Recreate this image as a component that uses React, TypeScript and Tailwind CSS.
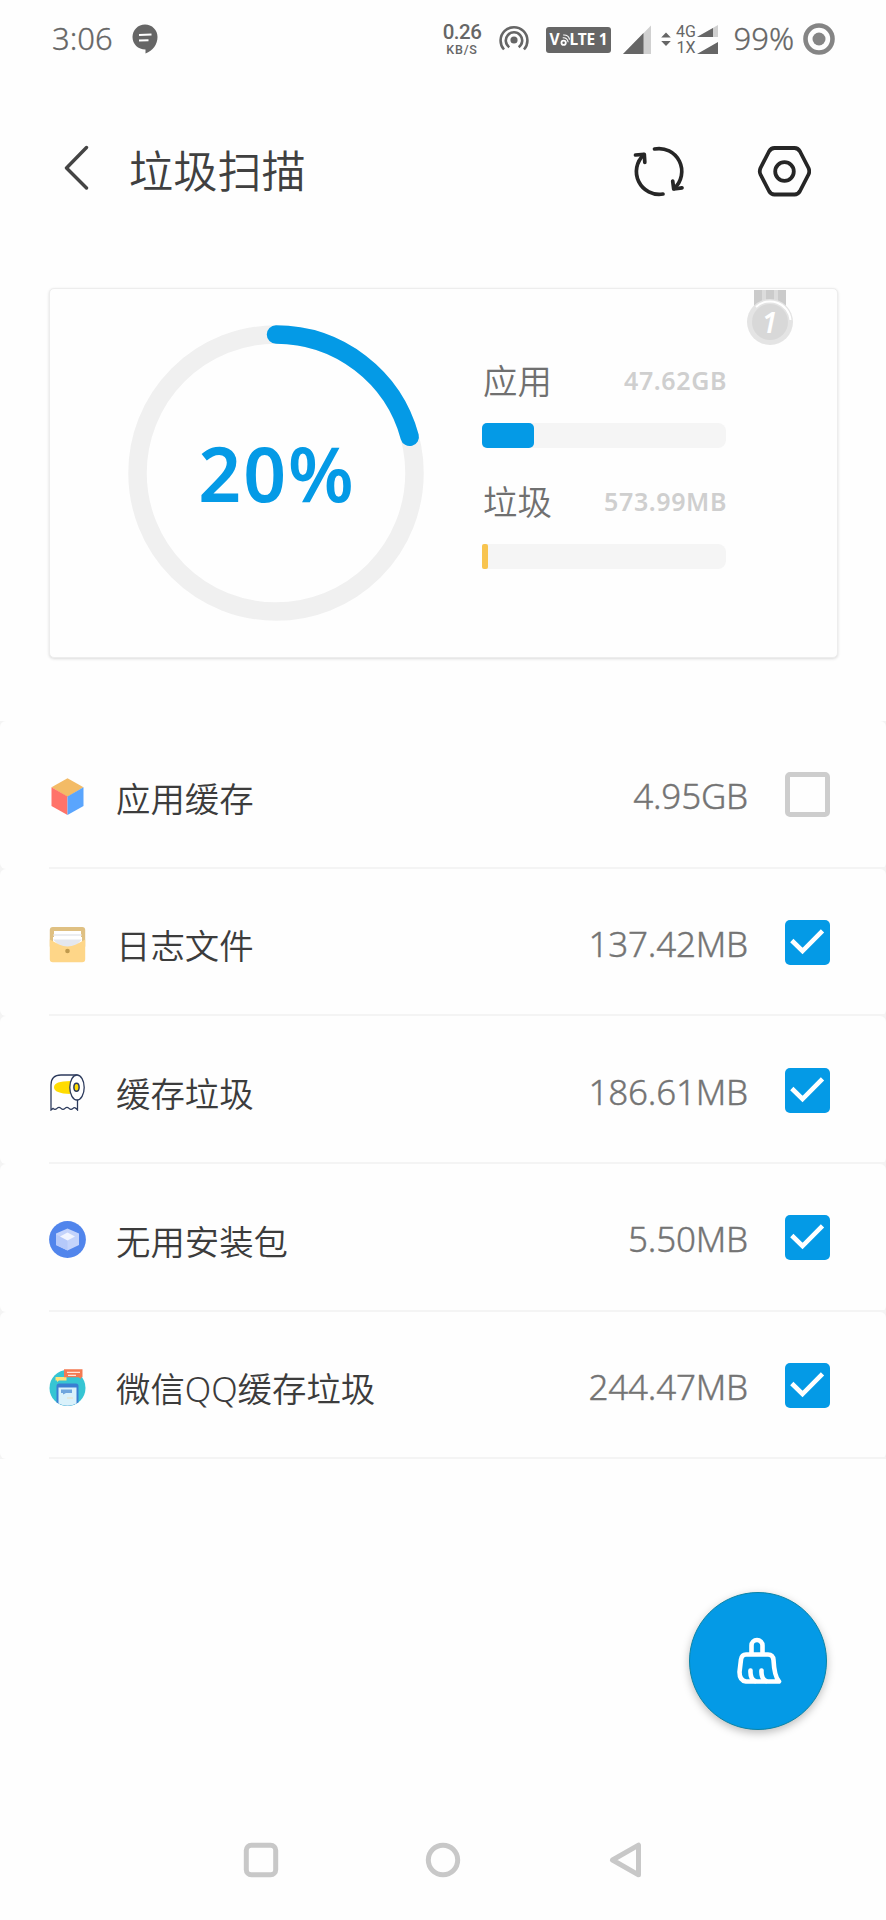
import React, { useState } from 'react';

type JunkItem = {
    id: string;
    label: string;
    size: string;
    checked: boolean;
    icon: React.ReactNode;
};

function CubeIcon() {
    return (
        <svg viewBox="0 0 37 37" className="h-[37px] w-[37px]">
            <path d="M18.5 0.3 34.5 9.2 18.5 19 2.5 9.2Z" fill="#f3bb66" />
            <path d="M2.5 9.2 18.5 18.6V37L2.5 28Z" fill="#ff7369" />
            <path d="M34.5 9.2 18.5 18.6V37L34.5 28Z" fill="#5aa5fd" />
        </svg>
    );
}

function EnvelopeIcon() {
    return (
        <svg viewBox="0 0 37 37" className="h-[37px] w-[37px]">
            <rect x="0.8" y="1" width="35.4" height="22" rx="3" fill="#dfc082" />
            <path d="M5 5h27v12H5z" fill="#fff" />
            <path d="M4.5 9h28" stroke="#e9ebf0" strokeWidth="1.8" />
            <path d="M4 11h29v9H4z" fill="#fff" />
            <path d="M4 13.5h29L27 19.5 18.5 22 10 19.5Z" fill="#e4e7ee" />
            <path d="M0.8 13.5 10 18.6Q18.5 22.6 27 18.6L36.2 13.5V33.2a3 3 0 0 1-3 3H3.8a3 3 0 0 1-3-3Z" fill="#fed688" />
            <circle cx="18.5" cy="25" r="2.3" fill="#c09a4d" />
        </svg>
    );
}

function PaperRollIcon() {
    return (
        <svg viewBox="0 0 37 37" className="h-[37px] w-[37px]" fill="none" stroke="#2c3a5c" strokeWidth="1.3">
            <path d="M21.5 7Q5 7 5 13.3T21.5 20Z" fill="#ffdc00" stroke="none" />
            <path d="M28.5 1H12Q2 1 2 11v25l2-1.6q2 2 4 0t4 0 4 0 4 0 4 0 4.5 1.6V26" />
            <ellipse cx="28" cy="13.5" rx="7.2" ry="12.5" fill="#fff" />
            <ellipse cx="27.5" cy="13.3" rx="2.6" ry="4" fill="#ffdc00" strokeWidth="1.5" />
        </svg>
    );
}

function PackageIcon() {
    return (
        <svg viewBox="0 0 37 37" className="h-[37px] w-[37px]">
            <circle cx="18.5" cy="18.5" r="18.4" fill="#5185ec" />
            <path d="M18.5 7.5 30 12.5V24L18.5 29.5 7 24V12.5Z" fill="#c3d3fb" />
            <path d="M7 13.5 18.5 19v10.5L7 24Z" fill="#b5c9fa" />
            <path d="M18.5 11.5 26 15.5 18.5 19.5 11 15.5Z" fill="#f1f5ff" />
        </svg>
    );
}

function ChatCacheIcon() {
    return (
        <svg viewBox="0 0 37 37" className="h-[37px] w-[37px]">
            <circle cx="18.5" cy="19" r="18" fill="#36c5d3" />
            <path d="M7.5 33.5V17a2.5 2.5 0 0 1 2.5-2.5h17a2.5 2.5 0 0 1 2.5 2.5v16.5Q18.5 40 7.5 33.5Z" fill="#3a7ed2" />
            <path d="M9.5 34.5V18.5h18v16Q18.5 39 9.5 34.5Z" fill="#d9f1fb" />
            <path d="M12 20.5h11v3.5h-6l-3 1.5v-1.5h-2z" fill="#6fa6de" />
            <path d="M18 29h6" stroke="#e9dfc0" strokeWidth="1" />
            <path d="M6.5 8h11v3.6H10l-2 1.4v-1.4H6.5z" fill="#fde37c" />
            <path d="M15 0.3h18.5v8H32V10l-2.5-1.7H15z" fill="#f47a52" />
            <path d="M18 3.3h13M19 6.3h8" stroke="#fde5da" strokeWidth="1.3" />
        </svg>
    );
}

const junkItems: JunkItem[] = [
    { id: 'app-cache', label: '应用缓存', size: '4.95GB', checked: false, icon: <CubeIcon /> },
    { id: 'logs', label: '日志文件', size: '137.42MB', checked: true, icon: <EnvelopeIcon /> },
    { id: 'cache', label: '缓存垃圾', size: '186.61MB', checked: true, icon: <PaperRollIcon /> },
    { id: 'packages', label: '无用安装包', size: '5.50MB', checked: true, icon: <PackageIcon /> },
    { id: 'chat', label: '微信QQ缓存垃圾', size: '244.47MB', checked: true, icon: <ChatCacheIcon /> },
];

function StatusBar() {
    return (
        <div className="flex h-[78px] items-center pl-[52px] text-[#666]">
            <span className="-mt-px w-[62px] text-[31px] font-light leading-none [-webkit-text-stroke:0.3px]">3:06</span>
            <svg viewBox="0 0 26 30" className="ml-[18px] h-[30px] w-[26px]">
                <path d="M13 0.5C20 0.5 25.5 6 25.5 13C25.5 20.5 21 26.5 13.5 29.5V25.6C6 25.6 0.5 20 0.5 13S6 0.5 13 0.5Z" fill="#666" />
                <path d="m7 11 12.5-.6M7 16.6l9.5-.3" stroke="#fff" strokeWidth="2" />
            </svg>

            <div className="ml-[282px] flex w-[44px] flex-col items-center font-['Roboto',sans-serif] font-medium leading-none">
                <span className="text-[20.5px] tracking-[-0.5px]">0.26</span>
                <span className="mt-px text-[12.5px] tracking-[0.8px]">KB/S</span>
            </div>

            {/* Hotspot */}
            <svg viewBox="0 0 30 28" className="ml-[15px] h-[28px] w-[30px]" fill="none" stroke="#666" strokeWidth="2.6">
                <circle cx="15" cy="15" r="3.6" fill="#666" stroke="none" />
                <path d="M10.3 22.2A8.2 8.2 0 1 1 19.7 22.2" />
                <path d="M5 24.5A13.4 13.4 0 1 1 25 24.5" />
            </svg>

            <div className="mt-[2px] ml-[17px] flex h-[26px] w-[65px] items-center justify-center rounded-[3px] bg-[#666] text-[15.5px] font-bold leading-none text-white">
                <span>V</span>
                <svg viewBox="0 0 11 16" className="h-[16px] w-[10px]" fill="none" stroke="#fff">
                    <circle cx="4" cy="11" r="2.4" strokeWidth="2" />
                    <path d="M3 5.5q5-.5 6 5M3.5 2.5q6-.5 7 5" strokeWidth="1.2" />
                </svg>
                <span className="tracking-[-0.2px]">LTE 1</span>
            </div>

            <svg viewBox="0 0 28 29" className="ml-[12px] h-[29px] w-[28px]">
                <path d="M28 0.5V29H0Z" fill="#d0d0d0" />
                <path d="M20.5 8V29H0Z" fill="#666" />
            </svg>

            <svg viewBox="0 0 10 15" className="ml-[10px] h-[15px] w-[10px]" fill="#666">
                <path d="M5 0.5 9.8 5.500H0.200ZM5 14 9.800 9H0.200Z" />
            </svg>
            <div className="ml-[4px] mt-px flex w-[22px] flex-col items-center font-['Roboto',sans-serif] text-[16px] leading-[16px]">
                <span>4G</span>
                <span>1X</span>
            </div>
            <svg viewBox="0 0 21 29" className="h-[29px] w-[21px]">
                <path d="M21 0V12H0Z" fill="#d0d0d0" />
                <path d="M16 3V12H0ZM21 17V29H0Z" fill="#666" />
            </svg>

            <span className="-mt-px ml-[15.5px] w-[60px] text-[31px] font-light leading-none [-webkit-text-stroke:0.3px]">99%</span>
            <svg viewBox="0 0 32 32" className="ml-[9px] h-[32px] w-[32px]">
                <circle cx="16" cy="16" r="13.5" fill="none" stroke="#858585" strokeWidth="4.6" />
                <circle cx="16" cy="16" r="6.5" fill="#858585" />
            </svg>
        </div>
    );
}

function Header() {
    return (
        <header className="flex h-[186px] items-center pl-[62px] text-[#404040]">
            <button type="button">
                <svg viewBox="0 0 30 46" className="-mt-[9px] h-[46px] w-[30px]" fill="none" stroke="#444" strokeWidth="3.4" strokeLinecap="round" strokeLinejoin="round">
                    <path d="M24.5 3.5 4.5 24 24.5 44" />
                </svg>
            </button>
            <h1 className="ml-[37px] w-[180px] text-[44.2px] font-[350] leading-none">垃圾扫描</h1>
            <button type="button" className="ml-[322px]">
                <svg viewBox="0 0 54 54" className="h-[54px] w-[54px]" fill="none" stroke="#262626" strokeWidth="3.7" strokeLinecap="round" strokeLinejoin="round">
                    <path d="M23.5 5A22.8 22.8 0 0 1 43 44.5" />
                    <path d="M32 50A22.8 22.8 0 0 1 12.7 10.8" />
                    <path d="M4.5 11l8.8-.7.5 8" />
                    <path d="M51 43.8l-8.3 1.2-1-8" />
                </svg>
            </button>
            <button type="button" className="ml-[72px]">
                <svg viewBox="0 0 54 54" className="h-[54px] w-[54px]" fill="none" stroke="#262626" strokeWidth="3.8" strokeLinejoin="round">
                    <path d="M17.5 4H37.5Q41 4 43 7.5L51.5 24Q53 27.5 51.5 30.5L43 47Q41 50.5 37.5 50.5H17.5Q14 50.5 12 47L3.5 30.5Q2 27.5 3.5 24L12 7.5Q14 4 17.5 4Z" />
                    <circle cx="27.5" cy="27.5" r="9.3" />
                </svg>
            </button>
        </header>
    );
}

function UsageRing({ percent }: { percent: number }) {
    return (
        <div className="relative mt-px h-[296px] w-[296px]">
            <svg viewBox="0 0 296 296" className="h-full w-full" fill="none" strokeWidth="18.5">
                <circle cx="148" cy="148" r="138.5" stroke="#f0f0f0" />
                <path d="M148 9.5A138.5 138.5 0 0 1 281.7 111.8" stroke="#049ae6" strokeLinecap="round" />
            </svg>
            <div className="absolute inset-0 flex items-center justify-center pl-[2px] text-[75px] font-semibold leading-none tracking-[2px] text-[#049ae6]">
                {percent}%
            </div>
        </div>
    );
}

function UsageBar({ label, value, barClass }: { label: string; value: string; barClass: string }) {
    return (
        <div className="h-[121px]">
            <div className="flex h-[63px] items-center justify-between">
                <span className="ml-px text-[34.4px] font-[350] leading-none text-[#707070]">{label}</span>
                <span className="-mr-px -mt-[2px] text-[25px] font-semibold leading-none tracking-[0.6px] text-[#cfcfcf]">{value}</span>
            </div>
            <div className="mt-[10px] h-[25px] rounded-l-[4px] rounded-r-[8px] bg-[#f5f5f5]">
                <div className={barClass} />
            </div>
        </div>
    );
}

function Medal() {
    return (
        <div className="absolute right-[43.5px] top-px flex h-[56px] w-[48px] items-end justify-center">
            <svg viewBox="0 0 48 56" className="absolute inset-0 h-full w-full">
                <path d="M8 0h32v20H8z" fill="#cbcbcb" />
                <path d="M16 0h4v16h-4zM28 0h4v16h-4z" fill="#dcdcdc" />
                <circle cx="24" cy="32" r="23" fill="#e4e4e4" />
                <circle cx="24" cy="32" r="18" fill="#d8d8d8" />
                <path d="M10 17A20.5 20.5 0 0 1 44.5 30" fill="none" stroke="#fff" strokeWidth="2" />
            </svg>
            <span className="relative mb-[10px] text-[28px] font-semibold italic leading-none text-white">1</span>
        </div>
    );
}

function SummaryCard() {
    return (
        <section className="relative mx-[49px] flex h-[370px] w-[789px] rounded-[5px] border border-[#ededed] bg-[#fefefe] pl-[78px] pt-[35px] shadow-[0_1px_3px_rgba(0,0,0,0.14)]">
            <UsageRing percent={20} />
            <div className="ml-[58px] mt-[26px] w-[244px]">
                <UsageBar label="应用" value="47.62GB" barClass="h-full w-[52px] rounded-[5px] bg-[#049ae6]" />
                <UsageBar label="垃圾" value="573.99MB" barClass="h-full w-[6px] rounded-[2px] bg-[#f8c44f]" />
            </div>
            <Medal />
        </section>
    );
}

function Checkbox({ checked, onChange }: { checked: boolean; onChange: () => void }) {
    return (
        <button type="button" role="checkbox" aria-checked={checked} onClick={onChange} className="h-[45px] w-[45px]">
            {checked ? (
                <svg viewBox="0 0 45 45" className="h-full w-full">
                    <rect width="45" height="45" rx="5" fill="#049ae6" />
                    <path d="m6.8 20.5 10.7 10.5L37.5 10.8" fill="none" stroke="#fff" strokeWidth="4.6" />
                </svg>
            ) : (
                <div className="h-full w-full rounded-[5px] border-[5px] border-[#cdcdcd]" />
            )}
        </button>
    );
}

function JunkList() {
    const [items, setItems] = useState(junkItems);

    const toggle = (id: string) => {
        setItems(items.map((item) => (item.id === id ? { ...item, checked: !item.checked } : item)));
    };

    return (
        <ul className="mt-[63px]">
            {items.map((item) => (
                <li key={item.id} className="h-[147.7px] bg-[#f4f4f4]">
                    <div className="h-full rounded-[6px] bg-[#fefefe] pl-[49px]">
                        <div className="flex h-full items-center border-b-2 border-[#f4f4f4] pr-[56px] pt-[2px]">
                            <span className="mt-[4px]">{item.icon}</span>
                            <span className="ml-[30px] mt-[8px] text-[34.4px] font-[350] leading-none text-[#3c3c3c]">{item.label}</span>
                            <span className="ml-auto mr-[37px] mt-[2px] text-[35px] font-light leading-none tracking-[-0.2px] text-[#747474] [-webkit-text-stroke:0.4px]">{item.size}</span>
                            <Checkbox checked={item.checked} onChange={() => toggle(item.id)} />
                        </div>
                    </div>
                </li>
            ))}
        </ul>
    );
}

function CleanButton() {
    return (
        <button type="button" className="flex h-[138px] w-[138px] items-center justify-center rounded-full border border-[#0b84a6] bg-[#049ae6] pl-[4px] shadow-[0_3px_8px_rgba(0,0,0,0.26)]">
            <svg viewBox="0 0 46 48" className="h-[48px] w-[46px]" fill="none" stroke="#fff" strokeWidth="4.6" strokeLinecap="round" strokeLinejoin="round">
                <path d="M14.5 16.5V8.5a5.5 5.5 0 0 1 11 0V16.5" />
                <path d="M9 17.5H31Q36 17.5 36.5 23C37 33 38 40 42 44.5H9Q2.5 43.5 2.5 35L4 22.5Q4.8 17.5 9 17.5Z" />
                <path d="M13.5 33.5Q13 41.5 18 44M24.5 33.5Q24 41.5 29 44" />
            </svg>
        </button>
    );
}

function NavBar() {
    return (
        <nav className="flex h-[120px] items-center justify-center gap-[144px]">
            <svg viewBox="0 0 38 38" className="h-[38px] w-[38px]" fill="none" stroke="#c8c8c8" strokeWidth="5">
                <rect x="4.3" y="4.3" width="29.4" height="29.4" rx="5" />
            </svg>
            <svg viewBox="0 0 38 38" className="h-[38px] w-[38px]" fill="none" stroke="#c8c8c8" strokeWidth="5">
                <circle cx="19" cy="19" r="14.7" />
            </svg>
            <svg viewBox="0 0 38 38" className="h-[38px] w-[38px]" fill="none" stroke="#c8c8c8" strokeWidth="5" strokeLinejoin="round">
                <path d="M6.5 19 32.5 4.2V33.8Z" />
            </svg>
        </nav>
    );
}

export default function App() {
    return (
        <div className="flex h-[1920px] w-[886px] flex-col bg-[#fefefe] font-['Noto_Sans','Noto_Sans_CJK_SC',sans-serif]">
            <StatusBar />
            <Header />
            <div className="pt-[24px]">
                <SummaryCard />
            </div>
            <JunkList />
            <div className="mt-auto flex h-[208px] justify-end pr-[59px]">
                <CleanButton />
            </div>
            <NavBar />
        </div>
    );
}
